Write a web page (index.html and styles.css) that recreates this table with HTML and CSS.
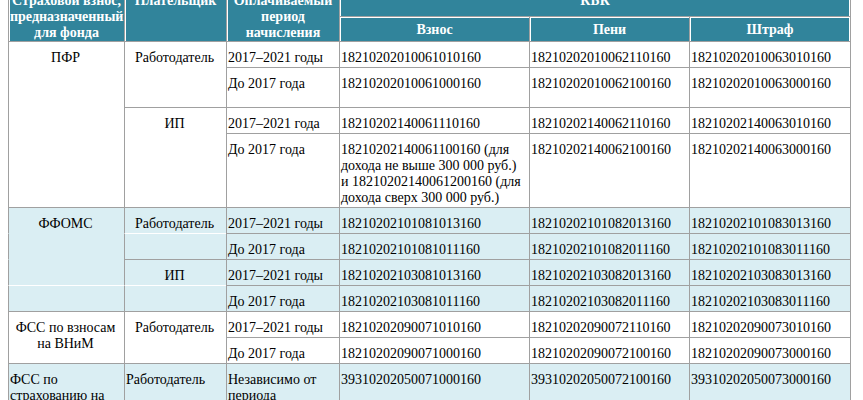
FILE: index.html
```html
<!DOCTYPE html>
<html lang="ru">
<head>
<meta charset="utf-8">
<title>КБК</title>
<link rel="stylesheet" href="styles.css">
</head>
<body>
<table class="kbk">
  <colgroup>
    <col class="w1"><col class="w2"><col class="w3"><col class="w4"><col class="w5"><col class="w6">
  </colgroup>
  <thead>
    <tr>
      <th rowspan="2">Страховой взнос, предназначенный для фонда</th>
      <th rowspan="2">Плательщик</th>
      <th rowspan="2">Оплачиваемый период начисления</th>
      <th colspan="3" class="last">КБК</th>
    </tr>
    <tr>
      <th class="sub">Взнос</th>
      <th class="sub">Пени</th>
      <th class="sub last">Штраф</th>
    </tr>
  </thead>
  <tbody>
    <tr>
      <td class="c" rowspan="4">ПФР</td>
      <td class="c" rowspan="2">Работодатель</td>
      <td>2017–2021 годы</td>
      <td>18210202010061010160</td>
      <td>18210202010062110160</td>
      <td>18210202010063010160</td>
    </tr>
    <tr class="tall">
      <td>До 2017 года</td>
      <td>18210202010061000160</td>
      <td>18210202010062100160</td>
      <td>18210202010063000160</td>
    </tr>
    <tr>
      <td class="c" rowspan="2">ИП</td>
      <td>2017–2021 года</td>
      <td>18210202140061110160</td>
      <td>18210202140062110160</td>
      <td>18210202140063010160</td>
    </tr>
    <tr>
      <td>До 2017 года</td>
      <td>18210202140061100160 (для дохода не выше 300 000 руб.) и 18210202140061200160 (для дохода сверх 300 000 руб.)</td>
      <td>18210202140062100160</td>
      <td>18210202140063000160</td>
    </tr>

    <tr class="blue">
      <td class="c">ФФОМС</td>
      <td class="c">Работодатель</td>
      <td>2017–2021 годы</td>
      <td>18210202101081013160</td>
      <td>18210202101082013160</td>
      <td>18210202101083013160</td>
    </tr>
    <tr class="blue">
      <td class="none"></td>
      <td class="cont"></td>
      <td>До 2017 года</td>
      <td>18210202101081011160</td>
      <td>18210202101082011160</td>
      <td>18210202101083011160</td>
    </tr>
    <tr class="blue">
      <td class="none"></td>
      <td class="c">ИП</td>
      <td>2017–2021 годы</td>
      <td>18210202103081013160</td>
      <td>18210202103082013160</td>
      <td>18210202103083013160</td>
    </tr>
    <tr class="blue">
      <td class="cont"></td>
      <td class="cont"></td>
      <td>До 2017 года</td>
      <td>18210202103081011160</td>
      <td>18210202103082011160</td>
      <td>18210202103083011160</td>
    </tr>

    <tr>
      <td class="c" rowspan="2">ФСС по взносам на ВНиМ</td>
      <td class="c" rowspan="2">Работодатель</td>
      <td>2017–2021 годы</td>
      <td>18210202090071010160</td>
      <td>18210202090072110160</td>
      <td>18210202090073010160</td>
    </tr>
    <tr>
      <td>До 2017 года</td>
      <td>18210202090071000160</td>
      <td>18210202090072100160</td>
      <td>18210202090073000160</td>
    </tr>

    <tr class="blue">
      <td>ФСС по страхованию на случай травматизма</td>
      <td>Работодатель</td>
      <td>Независимо от периода</td>
      <td>39310202050071000160</td>
      <td>39310202050072100160</td>
      <td>39310202050073000160</td>
    </tr>
  </tbody>
</table>
</body>
</html>
```
FILE: styles.css
```css
body {
  margin: 0 8px;
  background: #ffffff;
  color: #000000;
  font-family: "Liberation Serif", "Times New Roman", serif;
  font-size: 14px;
}

.kbk {
  border-collapse: separate;
  border-spacing: 0;
  table-layout: fixed;
  width: 843px;
  margin-top: -9px;
  border-right: 1px solid #a0a0a0;
  border-bottom: 1px solid #a0a0a0;
}

.w1 { width: 116px; }
.w2 { width: 102px; }
.w3 { width: 113px; }
.w4 { width: 190px; }
.w5 { width: 160px; }
.w6 { width: 161px; }

.kbk th,
.kbk td {
  border-left: 1px solid #a0a0a0;
  border-top: 1px solid #a0a0a0;
  line-height: 16px;
}

.kbk th {
  background: #31849b;
  color: #ffffff;
  font-weight: bold;
  text-align: center;
  vertical-align: top;
  padding: 1px 1px 0;
  box-shadow: inset 1px 1px 0 #ffffff;
}

.kbk th.sub {
  vertical-align: middle;
}

.kbk th.last {
  box-shadow: inset 1px 1px 0 #ffffff, inset -1px 0 0 #ffffff;
}

.kbk td {
  padding: 8px 3px 1px 1px;
  text-align: left;
  vertical-align: top;
  background: #ffffff;
}

.kbk td.c {
  text-align: center;
}

.kbk tr.tall td {
  padding-bottom: 15px;
}

.kbk tr.blue td {
  background: #daeef3;
}

.kbk td.cont {
  border-top-color: #ffffff;
}

.kbk td.none {
  border-top-color: transparent;
}
```
